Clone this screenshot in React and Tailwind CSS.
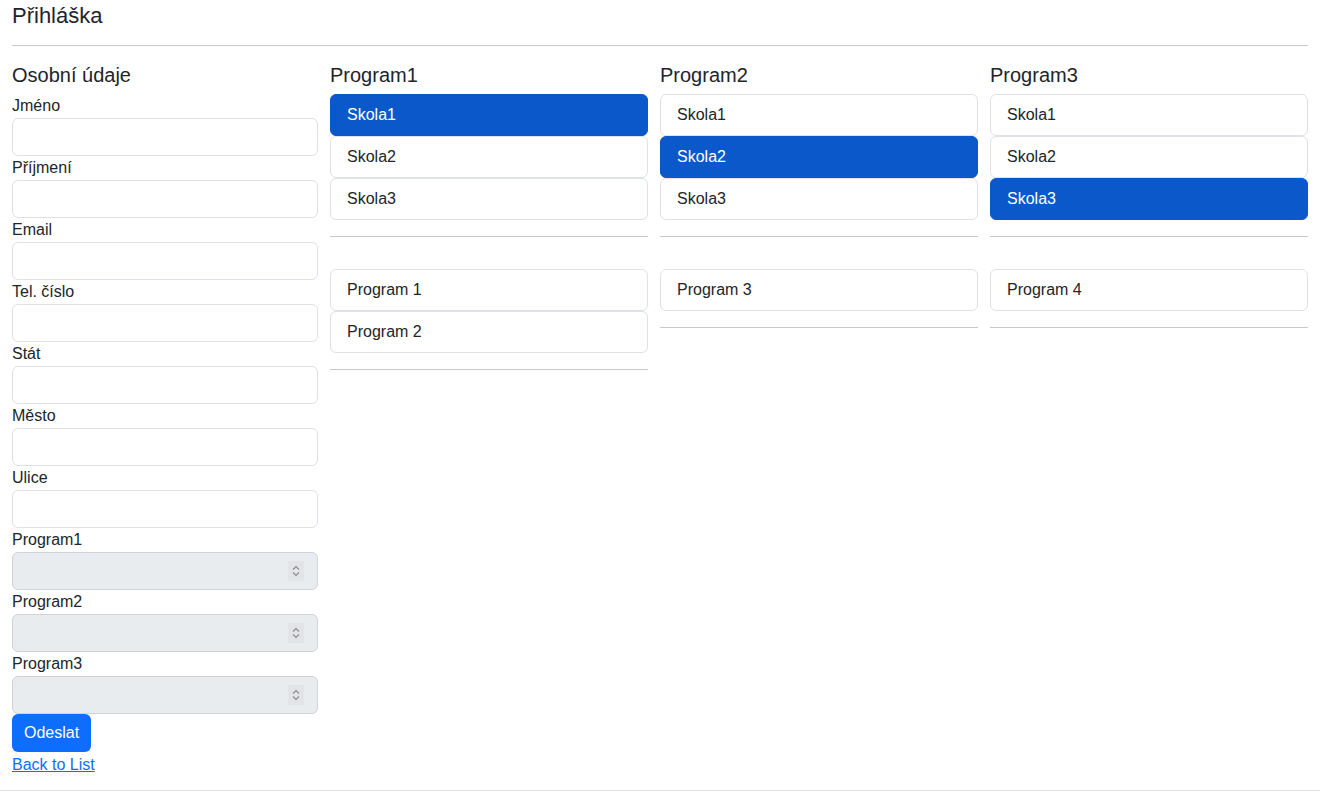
import { useState } from 'react';

const fields = ['Jméno', 'Příjmení', 'Email', 'Tel. číslo', 'Stát', 'Město', 'Ulice'];
const selects = ['Program1', 'Program2', 'Program3'];

const columns = [
  { title: 'Program1', active: 0, programs: ['Program 1', 'Program 2'] },
  { title: 'Program2', active: 1, programs: ['Program 3'] },
  { title: 'Program3', active: 2, programs: ['Program 4'] },
];

const Chevron = () => (
  <span className="flex h-5 w-4 items-center justify-center bg-[#e2e4e7]">
    <svg width="10" height="14" viewBox="0 0 10 14" fill="none" stroke="#8a8d91" strokeWidth="1.2">
      <path d="M2 5.5 L5 2.5 L8 5.5" />
      <path d="M2 8.5 L5 11.5 L8 8.5" />
    </svg>
  </span>
);

const ProgramColumn = ({ column }) => {
  const [active, setActive] = useState(column.active);
  return (
    <div className="w-[318px]">
      <h4 className="text-[20px] leading-[24px] mb-[7px] text-[#212529]">{column.title}</h4>
      <div className="flex flex-col">
        {['Skola1', 'Skola2', 'Skola3'].map((s, i) => (
          <div
            key={s}
            onClick={() => setActive(i)}
            className={`h-[42px] flex items-center px-4 rounded-md border cursor-pointer ${
              active === i
                ? 'bg-[#0a58ca] border-[#0a58ca] text-white'
                : 'bg-white border-[#dee2e6] text-[#212529]'
            }`}
          >
            {s}
          </div>
        ))}
      </div>
      <hr className="mt-4 mb-8 border-t border-[#c8c9ca]" />
      <div className="flex flex-col">
        {column.programs.map((p) => (
          <div key={p} className="h-[42px] flex items-center px-4 rounded-md border border-[#dee2e6] bg-white">
            {p}
          </div>
        ))}
      </div>
      <hr className="mt-4 border-t border-[#c8c9ca]" />
    </div>
  );
};

export default function App() {
  return (
    <div className="min-h-[792px] flex flex-col bg-white text-[16px] text-[#212529] font-['Segoe_UI','Liberation_Sans',sans-serif]">
      <div className="px-3 flex-1">
        <h2 className="text-[22px] leading-[32px] mb-[13px] text-[#212529]">Přihláška</h2>
        <hr className="border-t border-[#c8c9ca]" />
        <div className="flex gap-3 mt-[17px]">
          <div className="w-[306px]">
            <h4 className="text-[20px] leading-[24px] mb-[7px] text-[#212529]">Osobní údaje</h4>
            {fields.map((f) => (
              <div key={f}>
                <label className="block leading-[24px]">{f}</label>
                <input className="block w-full h-[38px] rounded-md border border-[#dee2e6] bg-white px-3" />
              </div>
            ))}
            {selects.map((s) => (
              <div key={s}>
                <label className="block leading-[24px]">{s}</label>
                <div className="h-[38px] w-full rounded-md border border-[#ced4da] bg-[#e9ecef] flex items-center justify-end pr-[13px]">
                  <Chevron />
                </div>
              </div>
            ))}
            <button className="h-[38px] px-3 rounded-md bg-[#0d6efd] text-white">Odeslat</button>
            <div className="mt-[1px]">
              <a href="#" className="text-[#0d6efd] underline leading-[24px]">Back to List</a>
            </div>
          </div>
          {columns.map((c) => (
            <ProgramColumn key={c.title} column={c} />
          ))}
        </div>
      </div>
      <div className="h-[2px] border-t border-[#dee2e6] mt-auto" />
    </div>
  );
}
